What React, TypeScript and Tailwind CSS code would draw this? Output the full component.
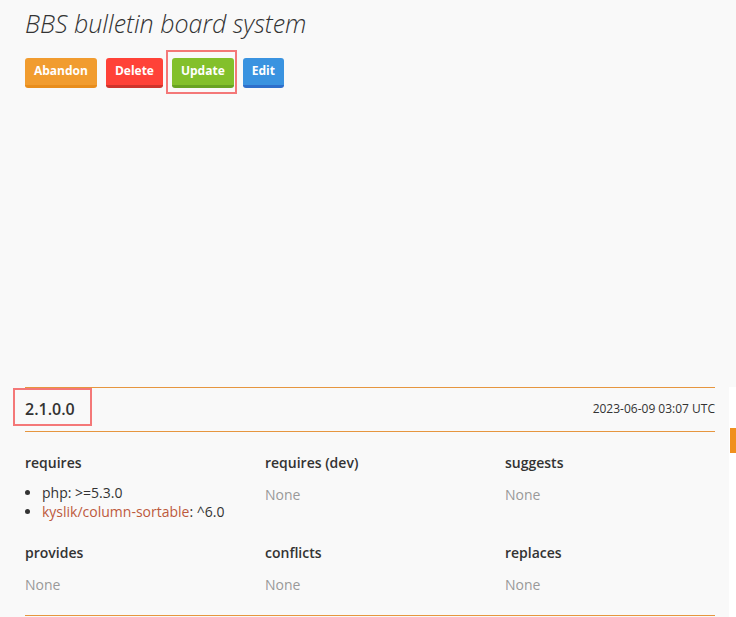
import React from "react";

const buttons = [
  { label: "Abandon", cls: "bg-[#f19c2f] border-[#e88d1c]" },
  { label: "Delete", cls: "bg-[#ff4238] border-[#cf342c]" },
  { label: "Update", cls: "bg-[#83c02b] border-[#68a322]", marked: true },
  { label: "Edit", cls: "bg-[#3a93e0] border-[#2e6fcb]" },
];

type Dep = { name: string; link?: boolean; version: string };

const sections: { title: string; items: Dep[] }[] = [
  {
    title: "requires",
    items: [
      { name: "php", version: ">=5.3.0" },
      { name: "kyslik/column-sortable", link: true, version: "^6.0" },
    ],
  },
  { title: "requires (dev)", items: [] },
  { title: "suggests", items: [] },
  { title: "provides", items: [] },
  { title: "conflicts", items: [] },
  { title: "replaces", items: [] },
];

function Section({ title, items }: { title: string; items: Dep[] }) {
  return (
    <div className="flex flex-col">
      <h3 className="text-[14px] font-semibold leading-[20px] text-[#333]">{title}</h3>
      {items.length === 0 ? (
        <p className="mt-[12px] text-[14px] leading-[20px] text-[#999]">None</p>
      ) : (
        <ul className="mt-[10px] ml-[17px] list-disc text-[14px] leading-[19px] text-[#333]">
          {items.map((d) => (
            <li key={d.name}>
              {d.link ? <a className="text-[#bd5a3d]">{d.name}</a> : d.name}: {d.version}
            </li>
          ))}
        </ul>
      )}
    </div>
  );
}

export default function App() {
  return (
    <div className="relative min-h-screen bg-[#f9f9f9] font-['Open_Sans',sans-serif] text-[#333]">
      <div className="w-[715px] pl-[25px]">
        <h1 className="pt-[7px] text-[25px] font-light italic leading-[33px] text-[#333]">
          BBS bulletin board system
        </h1>
        <div className="mt-[17px] flex gap-[9px]">
          {buttons.map((b) => (
            <div key={b.label} className="relative">
              <button
                type="button"
                className={`h-[30px] rounded-[3px] border-b-[3px] px-[9px] text-[12px] font-bold text-white ${b.cls}`}
              >
                {b.label}
              </button>
              {b.marked && (
                <span className="pointer-events-none absolute -top-[7px] -bottom-[6px] -left-[6px] -right-[3px] border-2 border-[#f47878]" />
              )}
            </div>
          ))}
        </div>

        <div className="h-[299px]" />

        <div className="flex items-center justify-between border-y border-[#e6963f] h-[45px]">
          <div className="relative">
            <span className="text-[16px] font-semibold">2.1.0.0</span>
            <span className="pointer-events-none absolute -top-[9px] -bottom-[5px] -left-[12px] -right-[17px] border-2 border-[#f47878]" />
          </div>
          <span className="text-[12px] text-[#333]">2023-06-09 03:07 UTC</span>
        </div>

        <div className="grid grid-cols-[240px_240px_1fr] gap-y-[22px] pt-[21px] pb-[20px] border-b border-[#e6963f]">
          {sections.map((s) => (
            <Section key={s.title} title={s.title} items={s.items} />
          ))}
        </div>
      </div>

      <div className="absolute right-0 top-[387px] bottom-0 w-[7px] bg-white">
        <div className="mt-[41px] ml-[1px] h-[25px] bg-[#f0901e]" />
      </div>
    </div>
  );
}
